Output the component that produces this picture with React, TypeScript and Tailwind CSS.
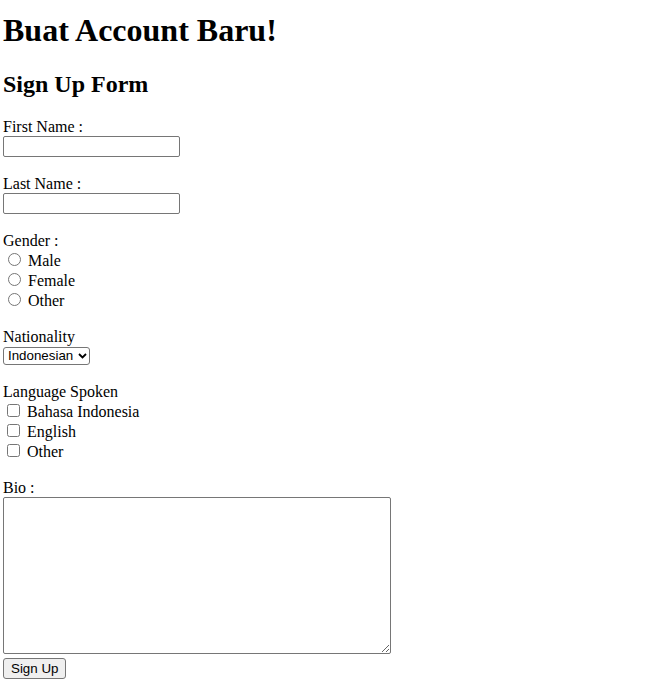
import React from 'react'

const serif = "font-['Liberation_Serif','Times_New_Roman',serif]"
const sans = "font-['Liberation_Sans',Arial,sans-serif]"

function Label({ children }: { children: React.ReactNode }) {
  return <div className="h-[18px] leading-[18px]">{children}</div>
}

function TextInput() {
  return (
    <input
      type="text"
      className={`${sans} block h-[21px] w-[177px] rounded-[2px] border border-[#767676] bg-white px-[2px] text-[13.33px]`}
    />
  )
}

function Choice({ type, name, label }: { type: 'radio' | 'checkbox'; name: string; label: string }) {
  return (
    <label className="flex h-[20px] items-start">
      <input
        type={type}
        name={name}
        className={
          type === 'radio'
            ? 'mt-[3px] mr-[3px] ml-[5px] h-[13px] w-[13px]'
            : 'mt-[3px] mr-[3px] ml-[4px] h-[13px] w-[13px]'
        }
      />
      <span className="mt-[2px] ml-[4px] leading-[18px]">{label}</span>
    </label>
  )
}

export default function App() {
  return (
    <div className={`${serif} min-h-[697px] bg-white pl-[3px] text-[16px] text-black`}>
      <h1 className="pt-[12px] text-[32px] leading-[37px] font-bold">Buat Account Baru!</h1>
      <h2 className="mt-[21px] text-[24px] leading-[28px] font-bold">Sign Up Form</h2>

      <form className="mt-[20px] flex flex-col items-start" onSubmit={(e) => e.preventDefault()}>
        {/* Nama */}
        <Label>First Name :</Label>
        <TextInput />
        <div className="mt-[18px]">
          <Label>Last Name :</Label>
        </div>
        <TextInput />

        {/* Gender */}
        <div className="mt-[18px]">
          <Label>Gender :</Label>
        </div>
        <Choice type="radio" name="gender" label="Male" />
        <Choice type="radio" name="gender" label="Female" />
        <Choice type="radio" name="gender" label="Other" />

        {/* Nationality */}
        <div className="mt-[18px]">
          <Label>Nationality</Label>
        </div>
        <div className="relative mt-[1px]">
          <select
            className={`${sans} block h-[18px] w-[87px] appearance-none rounded-[3px] border border-[#767676] bg-white pl-[4px] text-[13.33px] leading-[16px] text-black`}
            defaultValue="Indonesian"
          >
            <option>Indonesian</option>
            <option>Malaysian</option>
            <option>Singaporean</option>
            <option>Other</option>
          </select>
          <svg
            className="pointer-events-none absolute top-[6px] right-[3px]"
            width="9"
            height="6"
            viewBox="0 0 9 6"
          >
            <path d="M1 1 L4.5 4.5 L8 1" fill="none" stroke="#000" strokeWidth="1.8" />
          </svg>
        </div>

        {/* Language */}
        <div className="mt-[18px]">
          <Label>Language Spoken</Label>
        </div>
        <Choice type="checkbox" name="lang" label="Bahasa Indonesia" />
        <Choice type="checkbox" name="lang" label="English" />
        <Choice type="checkbox" name="lang" label="Other" />

        {/* Bio */}
        <div className="mt-[18px]">
          <Label>Bio :</Label>
        </div>
        <textarea
          className={`${sans} block h-[157px] w-[388px] rounded-[2px] border border-[#767676] bg-white p-[2px] text-[13.33px]`}
        />
        <button
          type="submit"
          className={`${sans} mt-[4px] h-[21px] rounded-[3px] border border-[#767676] bg-[#efefef] px-[7px] text-[13.33px] leading-[15px] text-black`}
        >
          Sign Up
        </button>
      </form>
    </div>
  )
}
